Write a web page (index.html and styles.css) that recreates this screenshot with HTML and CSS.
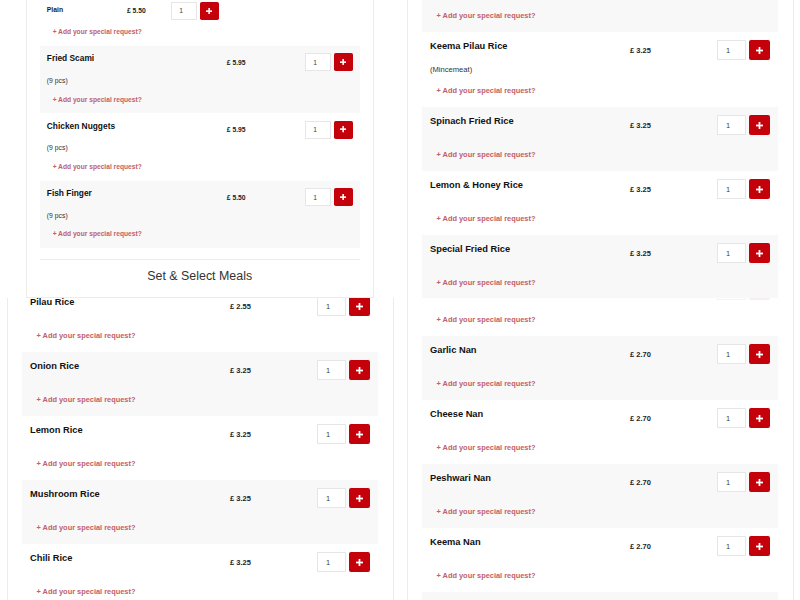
FILE: index.html
```html
<!DOCTYPE html>
<html>
  <head>
    <title>Menu</title>
    <meta name="viewport" content="width=device-width, initial-scale=1" />
    <link rel="stylesheet" href="styles.css">
  </head>
  <body>
    <div class="board">

      <!-- top left: sides, smaller view -->
      <section class="tile tile-tl">
        <div class="menu-card">
          <div class="item">
            <div class="option">
              <span class="option-name">Plain</span>
              <span class="price">£ 5.50</span>
              <div class="qty"><input class="qty-input" type="text" value="1"><button class="qty-add"><svg viewBox="0 0 8 8" width="7" height="7"><rect x="3" y="0" width="2" height="8" fill="#fff"/><rect x="0" y="3" width="8" height="2" fill="#fff"/></svg></button></div>
            </div>
            <a class="request">+ Add your special request?</a>
          </div>
          <div class="item shaded">
            <div class="item-head">
              <h4 class="item-name">Fried Scami</h4>
              <span class="price">£ 5.95</span>
              <div class="qty"><input class="qty-input" type="text" value="1"><button class="qty-add"><svg viewBox="0 0 8 8" width="7" height="7"><rect x="3" y="0" width="2" height="8" fill="#fff"/><rect x="0" y="3" width="8" height="2" fill="#fff"/></svg></button></div>
            </div>
            <p class="item-desc">(9 pcs)</p>
            <a class="request">+ Add your special request?</a>
          </div>
          <div class="item">
            <div class="item-head">
              <h4 class="item-name">Chicken Nuggets</h4>
              <span class="price">£ 5.95</span>
              <div class="qty"><input class="qty-input" type="text" value="1"><button class="qty-add"><svg viewBox="0 0 8 8" width="7" height="7"><rect x="3" y="0" width="2" height="8" fill="#fff"/><rect x="0" y="3" width="8" height="2" fill="#fff"/></svg></button></div>
            </div>
            <p class="item-desc">(9 pcs)</p>
            <a class="request">+ Add your special request?</a>
          </div>
          <div class="item shaded">
            <div class="item-head">
              <h4 class="item-name">Fish Finger</h4>
              <span class="price">£ 5.50</span>
              <div class="qty"><input class="qty-input" type="text" value="1"><button class="qty-add"><svg viewBox="0 0 8 8" width="7" height="7"><rect x="3" y="0" width="2" height="8" fill="#fff"/><rect x="0" y="3" width="8" height="2" fill="#fff"/></svg></button></div>
            </div>
            <p class="item-desc">(9 pcs)</p>
            <a class="request">+ Add your special request?</a>
          </div>
          <h3 class="section-title">Set &amp; Select Meals</h3>
        </div>
      </section>

      <!-- top right: rice -->
      <section class="tile tile-tr">
        <div class="menu-card">
          <div class="item shaded">
            <div class="item-head">
              <h4 class="item-name"></h4>
              <span class="price"></span>
              <div class="qty"><input class="qty-input" type="text" value="1"><button class="qty-add"></button></div>
            </div>
            <a class="request">+ Add your special request?</a>
          </div>
          <div class="item">
            <div class="item-head">
              <h4 class="item-name">Keema Pilau Rice</h4>
              <span class="price">£ 3.25</span>
              <div class="qty"><input class="qty-input" type="text" value="1"><button class="qty-add"><svg viewBox="0 0 8 8" width="7" height="7"><rect x="3" y="0" width="2" height="8" fill="#fff"/><rect x="0" y="3" width="8" height="2" fill="#fff"/></svg></button></div>
            </div>
            <p class="item-desc">(Mincemeat)</p>
            <a class="request">+ Add your special request?</a>
          </div>
          <div class="item shaded">
            <div class="item-head">
              <h4 class="item-name">Spinach Fried Rice</h4>
              <span class="price">£ 3.25</span>
              <div class="qty"><input class="qty-input" type="text" value="1"><button class="qty-add"><svg viewBox="0 0 8 8" width="7" height="7"><rect x="3" y="0" width="2" height="8" fill="#fff"/><rect x="0" y="3" width="8" height="2" fill="#fff"/></svg></button></div>
            </div>
            <a class="request">+ Add your special request?</a>
          </div>
          <div class="item">
            <div class="item-head">
              <h4 class="item-name">Lemon &amp; Honey Rice</h4>
              <span class="price">£ 3.25</span>
              <div class="qty"><input class="qty-input" type="text" value="1"><button class="qty-add"><svg viewBox="0 0 8 8" width="7" height="7"><rect x="3" y="0" width="2" height="8" fill="#fff"/><rect x="0" y="3" width="8" height="2" fill="#fff"/></svg></button></div>
            </div>
            <a class="request">+ Add your special request?</a>
          </div>
          <div class="item shaded">
            <div class="item-head">
              <h4 class="item-name">Special Fried Rice</h4>
              <span class="price">£ 3.25</span>
              <div class="qty"><input class="qty-input" type="text" value="1"><button class="qty-add"><svg viewBox="0 0 8 8" width="7" height="7"><rect x="3" y="0" width="2" height="8" fill="#fff"/><rect x="0" y="3" width="8" height="2" fill="#fff"/></svg></button></div>
            </div>
            <a class="request">+ Add your special request?</a>
          </div>
        </div>
      </section>

      <!-- bottom left: rice -->
      <section class="tile tile-bl">
        <div class="menu-card">
          <div class="item">
            <div class="item-head">
              <h4 class="item-name">Pilau Rice</h4>
              <span class="price">£ 2.55</span>
              <div class="qty"><input class="qty-input" type="text" value="1"><button class="qty-add"><svg viewBox="0 0 8 8" width="7" height="7"><rect x="3" y="0" width="2" height="8" fill="#fff"/><rect x="0" y="3" width="8" height="2" fill="#fff"/></svg></button></div>
            </div>
            <a class="request">+ Add your special request?</a>
          </div>
          <div class="item shaded">
            <div class="item-head">
              <h4 class="item-name">Onion Rice</h4>
              <span class="price">£ 3.25</span>
              <div class="qty"><input class="qty-input" type="text" value="1"><button class="qty-add"><svg viewBox="0 0 8 8" width="7" height="7"><rect x="3" y="0" width="2" height="8" fill="#fff"/><rect x="0" y="3" width="8" height="2" fill="#fff"/></svg></button></div>
            </div>
            <a class="request">+ Add your special request?</a>
          </div>
          <div class="item">
            <div class="item-head">
              <h4 class="item-name">Lemon Rice</h4>
              <span class="price">£ 3.25</span>
              <div class="qty"><input class="qty-input" type="text" value="1"><button class="qty-add"><svg viewBox="0 0 8 8" width="7" height="7"><rect x="3" y="0" width="2" height="8" fill="#fff"/><rect x="0" y="3" width="8" height="2" fill="#fff"/></svg></button></div>
            </div>
            <a class="request">+ Add your special request?</a>
          </div>
          <div class="item shaded">
            <div class="item-head">
              <h4 class="item-name">Mushroom Rice</h4>
              <span class="price">£ 3.25</span>
              <div class="qty"><input class="qty-input" type="text" value="1"><button class="qty-add"><svg viewBox="0 0 8 8" width="7" height="7"><rect x="3" y="0" width="2" height="8" fill="#fff"/><rect x="0" y="3" width="8" height="2" fill="#fff"/></svg></button></div>
            </div>
            <a class="request">+ Add your special request?</a>
          </div>
          <div class="item">
            <div class="item-head">
              <h4 class="item-name">Chili Rice</h4>
              <span class="price">£ 3.25</span>
              <div class="qty"><input class="qty-input" type="text" value="1"><button class="qty-add"><svg viewBox="0 0 8 8" width="7" height="7"><rect x="3" y="0" width="2" height="8" fill="#fff"/><rect x="0" y="3" width="8" height="2" fill="#fff"/></svg></button></div>
            </div>
            <a class="request">+ Add your special request?</a>
          </div>
        </div>
      </section>

      <!-- bottom right: nan -->
      <section class="tile tile-br">
        <div class="menu-card">
          <div class="item">
            <div class="item-head">
              <h4 class="item-name"></h4>
              <span class="price"></span>
              <div class="qty"><input class="qty-input faded" type="text" value=""><button class="qty-add faded"></button></div>
            </div>
            <a class="request">+ Add your special request?</a>
          </div>
          <div class="item shaded">
            <div class="item-head">
              <h4 class="item-name">Garlic Nan</h4>
              <span class="price">£ 2.70</span>
              <div class="qty"><input class="qty-input" type="text" value="1"><button class="qty-add"><svg viewBox="0 0 8 8" width="7" height="7"><rect x="3" y="0" width="2" height="8" fill="#fff"/><rect x="0" y="3" width="8" height="2" fill="#fff"/></svg></button></div>
            </div>
            <a class="request">+ Add your special request?</a>
          </div>
          <div class="item">
            <div class="item-head">
              <h4 class="item-name">Cheese Nan</h4>
              <span class="price">£ 2.70</span>
              <div class="qty"><input class="qty-input" type="text" value="1"><button class="qty-add"><svg viewBox="0 0 8 8" width="7" height="7"><rect x="3" y="0" width="2" height="8" fill="#fff"/><rect x="0" y="3" width="8" height="2" fill="#fff"/></svg></button></div>
            </div>
            <a class="request">+ Add your special request?</a>
          </div>
          <div class="item shaded">
            <div class="item-head">
              <h4 class="item-name">Peshwari Nan</h4>
              <span class="price">£ 2.70</span>
              <div class="qty"><input class="qty-input" type="text" value="1"><button class="qty-add"><svg viewBox="0 0 8 8" width="7" height="7"><rect x="3" y="0" width="2" height="8" fill="#fff"/><rect x="0" y="3" width="8" height="2" fill="#fff"/></svg></button></div>
            </div>
            <a class="request">+ Add your special request?</a>
          </div>
          <div class="item">
            <div class="item-head">
              <h4 class="item-name">Keema Nan</h4>
              <span class="price">£ 2.70</span>
              <div class="qty"><input class="qty-input" type="text" value="1"><button class="qty-add"><svg viewBox="0 0 8 8" width="7" height="7"><rect x="3" y="0" width="2" height="8" fill="#fff"/><rect x="0" y="3" width="8" height="2" fill="#fff"/></svg></button></div>
            </div>
            <a class="request">+ Add your special request?</a>
          </div>
          <div class="item shaded">
            <div class="item-head">
              <h4 class="item-name"></h4>
              <span class="price"></span>
              <div class="qty"></div>
            </div>
          </div>
        </div>
      </section>

    </div>
  </body>
</html>
```

FILE: styles.css
```css
html {
  font-family: "Liberation Sans", Arial, Helvetica, sans-serif;
}
body {
  margin: 0;
  background-color: white;
  overflow: hidden;
}
.board {
  width: 800px;
  height: 600px;
  display: grid;
  grid-template-columns: 400px 400px;
  grid-template-rows: 298px 302px;
}
.tile {
  overflow: hidden;
  padding-left: 7px;
}
.tile-tl {
  padding-left: 26px;
}
.menu-card {
  width: 387px;
  box-sizing: border-box;
  border: 1px solid #ececec;
  background-color: white;
  padding: 13px 15px 13px 14px;
}
.tile-tl .menu-card {
  zoom: 0.9;
  margin-top: -20px;
}
.tile-tr .menu-card {
  margin-top: -46px;
}
.tile-bl .menu-card {
  margin-top: -24px;
}
.tile-br .menu-card {
  margin-top: -40px;
}
.item {
  padding: 8px 8px 11px;
}
.item.shaded {
  background-color: #f8f8f8;
}
.item-head {
  display: grid;
  grid-template-columns: 200px 1fr auto;
  align-items: center;
  min-height: 20px;
}
.item-name {
  margin: 0;
  align-self: start;
  font-size: 9.3px;
  line-height: 13px;
  font-weight: bold;
  color: #111;
}
.option {
  display: grid;
  grid-template-columns: 89px 49px auto;
  align-items: center;
}
.option-name {
  font-size: 7.6px;
  font-weight: bold;
  color: #1a1a1a;
  margin-top: -3px;
}
.price {
  font-size: 7.5px;
  font-weight: bold;
  color: #222;
}
.qty {
  display: flex;
  gap: 3px;
}
.qty-input {
  box-sizing: border-box;
  width: 29px;
  height: 20px;
  margin: 0;
  border: 1px solid #e6e6e6;
  padding: 0 0 0 8px;
  font-family: "Liberation Sans", Arial, sans-serif;
  font-size: 7.5px;
  color: #444;
  background-color: white;
}
.qty-add {
  width: 21px;
  height: 20px;
  margin: 0;
  padding: 0;
  border: none;
  border-radius: 2px;
  background-color: #c4000b;
  display: flex;
  align-items: center;
  justify-content: center;
}
.qty-input.faded {
  border-color: #f4f4f4;
}
.qty-add.faded {
  background-color: #f6f0f0;
}
.item-desc {
  margin: 5px 0 0;
  font-size: 7.6px;
  line-height: 10px;
  color: #333;
}
.request {
  display: block;
  margin-top: 15px;
  padding-left: 6.5px;
  font-size: 7.4px;
  line-height: 10px;
  font-weight: bold;
  color: #c0606a;
}
.item-desc + .request {
  margin-top: 11px;
}
.option + .request {
  margin-top: 8px;
}
.section-title {
  margin: 12px 0 0;
  border-top: 1px solid #ececec;
  padding: 10px 0 1px;
  font-size: 13.8px;
  line-height: 17px;
  font-weight: normal;
  text-align: center;
  color: #333;
}
```
